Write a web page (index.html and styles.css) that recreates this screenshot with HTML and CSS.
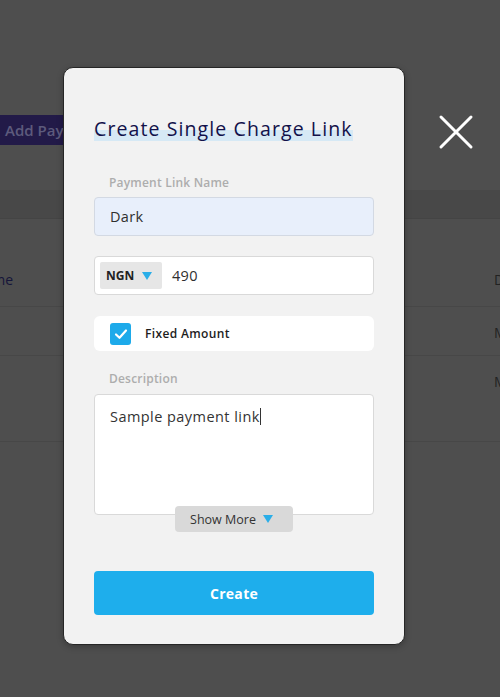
FILE: index.html
```html
<!DOCTYPE html>
<html>
<head>
<meta charset="utf-8">
<link rel="stylesheet" href="styles.css">
</head>
<body>
<div class="page">
  <div class="toolbar">
    <button class="add-btn">Add Payment Link</button>
  </div>
  <div class="table">
    <div class="thead-band"></div>
    <div class="row head">
      <span class="cell name">Name</span>
      <span class="cell date">Date</span>
    </div>
    <div class="row">
      <span class="cell name"></span>
      <span class="cell date">May</span>
    </div>
    <div class="row tall">
      <span class="cell name"></span>
      <span class="cell date">May</span>
    </div>
  </div>
</div>

<div class="modal">
  <h1 class="title"><span class="hl">Create Single Charge Link</span></h1>

  <label class="label">Payment Link Name</label>
  <div class="field filled">Dark</div>

  <div class="field amount">
    <div class="currency">NGN <span class="tri"></span></div>
    <span class="amount-val">490</span>
  </div>

  <div class="check-row">
    <span class="checkbox">
      <svg width="14" height="12" viewBox="0 0 14 12"><path d="M2 6.5 L5.5 9.8 L12 2.5" fill="none" stroke="#fff" stroke-width="2.2" stroke-linecap="round" stroke-linejoin="round"/></svg>
    </span>
    <span class="check-label">Fixed Amount</span>
  </div>

  <label class="label desc-label">Description</label>
  <div class="textarea-wrap">
    <div class="textarea">Sample payment link<span class="caret"></span></div>
    <button class="show-more">Show More <span class="tri"></span></button>
  </div>

  <button class="create">Create</button>
</div>

<div class="close">
  <svg width="36" height="36" viewBox="0 0 36 36"><path d="M3 3 L33 33 M33 3 L3 33" stroke="#fff" stroke-width="3" stroke-linecap="round"/></svg>
</div>
</body>
</html>
```

FILE: styles.css
```css
html, body {
  margin: 0;
  padding: 0;
  width: 500px;
  height: 697px;
  overflow: hidden;
  background: #4e4e4e;
  font-family: "Open Sans", "Noto Sans", sans-serif;
}

.page {
  width: 500px;
  height: 697px;
  overflow: hidden;
  padding-top: 115px;
  box-sizing: border-box;
}

.toolbar {
  height: 30px;
  margin-left: -4px;
}

.add-btn {
  height: 30px;
  border: none;
  background: #221a48;
  color: #5d5a7c;
  font-family: inherit;
  font-weight: 600;
  font-size: 15px;
  padding: 0 10px 0 9px;
  border-radius: 2px;
}

.table {
  margin-top: 45px;
}

.thead-band {
  height: 28px;
  background: #484848;
  border-bottom: 1px solid #444;
}

.row {
  display: flex;
  justify-content: space-between;
  align-items: flex-start;
  height: 48px;
  border-bottom: 1px solid #474747;
  margin-left: -26px;
  margin-right: -44px;
  font-size: 14px;
  color: #1c1c2c;
}

.row.head {
  height: 88px;
  align-items: center;
  padding-top: 34px;
  box-sizing: border-box;
  color: #15153a;
}

.row.tall {
  height: 85px;
}

.row .cell {
  width: 50px;
  padding-top: 16px;
}

.row.head .cell {
  padding-top: 0;
}

.row .date {
  color: #222;
}

/* Modal */
.modal {
  position: absolute;
  left: 63px;
  top: 67px;
  width: 342px;
  height: 578px;
  box-sizing: border-box;
  background: #f2f2f2;
  border: 1px solid #262626;
  border-radius: 10px;
  padding: 48px 30px 0 30px;
  display: flex;
  flex-direction: column;
  box-shadow: 0 2px 6px rgba(0,0,0,0.25);
}

.title {
  margin: 0;
  font-size: 19.5px;
  font-weight: 500;
  color: #12114a;
  line-height: 26px;
  letter-spacing: 1.1px;
  white-space: nowrap;
}

.hl {
  background: linear-gradient(to bottom, transparent 54%, #d6e9f5 54%, #d6e9f5 96%, transparent 96%);
}

.label {
  display: block;
  font-size: 12px;
  font-weight: 600;
  color: #adadad;
  padding-left: 15px;
  margin-top: 33px;
  line-height: 16px;
  letter-spacing: 0.2px;
}

.field {
  height: 39px;
  box-sizing: border-box;
  border: 1px solid #d9d9d9;
  border-radius: 4px;
  background: #fff;
  display: flex;
  align-items: center;
  font-size: 14.5px;
  color: #2f2f2f;
  margin-top: 6px;
  letter-spacing: 0.3px;
}

.field.filled {
  background: #e8effb;
  border-color: #d3d9e3;
  padding-left: 15px;
}

.field.amount {
  margin-top: 20px;
  padding-left: 5px;
}

.currency {
  width: 62px;
  height: 27px;
  box-sizing: border-box;
  background: #e6e6e6;
  border-radius: 2px;
  display: flex;
  align-items: center;
  padding-left: 6px;
  gap: 8px;
  font-size: 12px;
  font-weight: 700;
  color: #222;
  letter-spacing: 0;
}

.tri {
  display: inline-block;
  width: 0;
  height: 0;
  border-left: 5px solid transparent;
  border-right: 5px solid transparent;
  border-top: 8px solid #2aaee8;
}

.amount-val {
  margin-left: 10px;
}

.check-row {
  margin-top: 21px;
  height: 35px;
  background: #fff;
  border-radius: 6px;
  display: flex;
  align-items: center;
  padding-left: 16px;
}

.checkbox {
  width: 21px;
  height: 22px;
  background: #1daaea;
  border-radius: 3px;
  display: flex;
  align-items: center;
  justify-content: center;
}

.check-label {
  margin-left: 14px;
  font-size: 12px;
  font-weight: 600;
  color: #1d1d1d;
  letter-spacing: 0.35px;
}

.desc-label {
  margin-top: 20px;
}

.textarea-wrap {
  position: relative;
  margin-top: 7px;
  height: 138px;
}

.textarea {
  height: 121px;
  box-sizing: border-box;
  background: #fff;
  border: 1px solid #d9d9d9;
  border-radius: 4px;
  padding: 12px 15px;
  font-size: 14.5px;
  letter-spacing: 0.45px;
  color: #333;
}

.caret {
  display: inline-block;
  width: 1px;
  height: 17px;
  background: #333;
  vertical-align: -3px;
}

.show-more {
  position: absolute;
  left: 81px;
  top: 112px;
  width: 118px;
  height: 26px;
  border: none;
  border-radius: 4px;
  background: #d9d9d9;
  font-family: inherit;
  font-size: 12.5px;
  color: #333;
  display: flex;
  align-items: center;
  justify-content: center;
  gap: 7px;
  padding: 0 5px 0 0;
}

.create {
  margin-top: 39px;
  height: 44px;
  border: none;
  border-radius: 4px;
  background: #1eaeec;
  color: #fff;
  font-family: inherit;
  font-size: 14px;
  font-weight: 700;
  letter-spacing: 0.3px;
}

.close {
  position: absolute;
  left: 438px;
  top: 114px;
  width: 36px;
  height: 36px;
}
```
